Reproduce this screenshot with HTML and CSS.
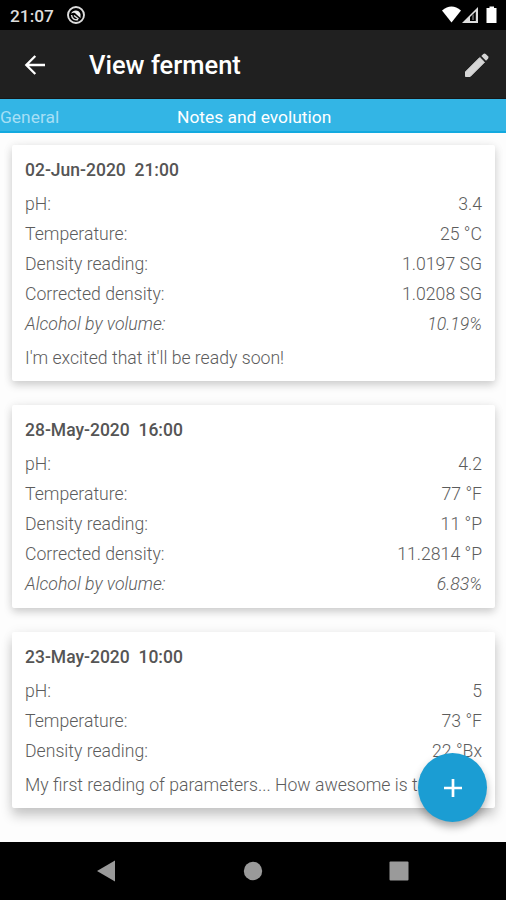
FILE: index.html
```html
<!DOCTYPE html>
<html lang="en">
<head>
    <meta charset="utf-8">
    <title>View ferment</title>
    <link rel="stylesheet" href="styles.css">
</head>
<body>
    <div class="screen">
        <div class="status-bar">
            <span class="clock">21:07</span>
            <svg class="notification" width="20" height="20" viewBox="0 0 20 20">
                <circle cx="10" cy="10" r="8" fill="none" stroke="#ddd" stroke-width="1.9"/>
                <path d="M5 8.5C7 4.500 13 4.500 14.500 9L14.500 13L10.500 9.500C9 7.500 7.500 7.500 5 8.500Z" fill="#eee"/>
                <path d="M5.500 10C6 14 9 15.500 12 14.500M8 10.500L12.500 14" fill="none" stroke="#ddd" stroke-width="1.500"/>
            </svg>
            <svg class="signals" width="56" height="18" viewBox="0 0 56 18">
                <path d="M0 4.500Q9.500-3.500 19 4.500L9.500 16.500Z" fill="#fff"/>
                <path d="M20 17L36 1V17Z" fill="#ddd"/>
                <path d="M28 15V11L33.800 5.500V15Z" fill="#000"/>
                <path d="M30 9.500L32 8V14H30Z" fill="#555"/>
                <path d="M45 2H47.500V0.500H52V2H54.500V17H44.500V2Z" fill="#fff"/>
            </svg>
        </div>

        <div class="app-bar">
            <svg class="back" width="22" height="22" viewBox="0 0 22 22">
                <path d="M21 11H2.500M11.300 2L2.300 11L11.300 20" fill="none" stroke="#fff" stroke-width="2.300"/>
            </svg>
            <h1>View ferment</h1>
            <svg class="edit" width="26" height="26" viewBox="0 0 26 26">
                <path d="M1.500 24.500V19.800L15.800 5.500L20.500 10.200L6.200 24.500Z" fill="#d6d6d6" stroke="#d6d6d6" stroke-linejoin="round"/>
                <path d="M17.300 4L19.300 2Q20.500 1 21.700 2L24 4.300Q25 5.500 24 6.700L22 8.700Z" fill="#d6d6d6"/>
            </svg>
        </div>

        <div class="tabs">
            <span class="tab">General</span>
            <span class="tab active">Notes and evolution</span>
        </div>

        <div class="content">
            <div class="card">
                <h2>02-Jun-2020&nbsp; 21:00</h2>
                <div class="row"><span>pH:</span><span>3.4</span></div>
                <div class="row"><span>Temperature:</span><span>25 °C</span></div>
                <div class="row"><span>Density reading:</span><span>1.0197 SG</span></div>
                <div class="row"><span>Corrected density:</span><span>1.0208 SG</span></div>
                <div class="row alcohol"><span>Alcohol by volume:</span><span>10.19%</span></div>
                <p class="note">I'm excited that it'll be ready soon!</p>
            </div>

            <div class="card no-note">
                <h2>28-May-2020&nbsp; 16:00</h2>
                <div class="row"><span>pH:</span><span>4.2</span></div>
                <div class="row"><span>Temperature:</span><span>77 °F</span></div>
                <div class="row"><span>Density reading:</span><span>11 °P</span></div>
                <div class="row"><span>Corrected density:</span><span>11.2814 °P</span></div>
                <div class="row alcohol"><span>Alcohol by volume:</span><span>6.83%</span></div>
            </div>

            <div class="card last">
                <h2>23-May-2020&nbsp; 10:00</h2>
                <div class="row"><span>pH:</span><span>5</span></div>
                <div class="row"><span>Temperature:</span><span>73 °F</span></div>
                <div class="row"><span>Density reading:</span><span>22 °Bx</span></div>
                <p class="note">My first reading of parameters... How awesome is t</p>
            </div>

            <button class="add" aria-label="Add">
                <svg width="18" height="18" viewBox="0 0 18 18">
                    <path d="M9 0V18M0 9H18" stroke="#fff" stroke-width="2.700"/>
                </svg>
            </button>
        </div>

        <div class="nav-bar">
            <svg width="20" height="22" viewBox="0 0 20 22"><path d="M1 11L19 0.500V21.500Z" fill="#9a9a9a"/></svg>
            <svg width="20" height="20" viewBox="0 0 20 20"><circle cx="10" cy="10" r="9.200" fill="#9a9a9a"/></svg>
            <svg width="20" height="20" viewBox="0 0 20 20"><rect x="0.500" y="0.500" width="19" height="19" rx="1" fill="#9a9a9a"/></svg>
        </div>
    </div>
</body>
</html>
```

FILE: styles.css
```css
* {
    box-sizing: border-box;
}

body {
    margin: 0;
    font-family: Roboto, "Liberation Sans", sans-serif;
    background-color: #fff;
}

.screen {
    width: 506px;
    height: 900px;
    display: flex;
    flex-direction: column;
    overflow: hidden;
}

.status-bar {
    height: 30px;
    display: flex;
    align-items: center;
    padding: 0 8px 0 10px;
    background-color: #000;
}

.clock {
    font-size: 17.3px;
    font-weight: 500;
    line-height: 20px;
    color: #ddd;
    margin-top: 2px;
}

.notification {
    margin-left: 12px;
}

.signals {
    margin-left: auto;
}

.app-bar {
    height: 69px;
    display: flex;
    align-items: center;
    padding: 1px 16px 0 24px;
    background-color: #202020;
    border-bottom: 1px solid #171717;
}

.app-bar h1 {
    margin: 1px 0 0 43px;
    font-size: 25.5px;
    font-weight: 500;
    color: #fff;
}

.edit {
    margin-left: auto;
}

.tabs {
    height: 34px;
    display: flex;
    align-items: center;
    padding-top: 4px;
    background-color: #33b5e5;
    border-bottom: 2px solid #12a9df;
    font-size: 17.4px;
    color: #fff;
}

.tab {
    width: 177px;
    color: #a6dff5;
}

.tab.active {
    width: auto;
    color: #fff;
}

.content {
    position: relative;
    flex: 1;
    display: flex;
    flex-direction: column;
    gap: 24px;
    padding: 12px 11px 0 12px;
    background-color: #fdfdfd;
}

.card {
    padding: 10px 13px 8px;
    background-color: #fff;
    border-radius: 2px;
    box-shadow: 0 4px 8px rgba(0, 0, 0, 0.17), 0 0 12px rgba(0, 0, 0, 0.06);
    font-size: 17.65px;
    font-weight: 300;
    line-height: 30px;
    color: #5c5c5c;
}

.card.no-note {
    padding-bottom: 9px;
}

.card h2 {
    margin: 0 0 4px;
    font-size: 17.5px;
    font-weight: 500;
    color: #555;
}

.row {
    display: flex;
    justify-content: space-between;
}

.alcohol {
    font-style: italic;
}

.note {
    margin: 4px 0 0;
    white-space: nowrap;
}

.card.last {
    box-shadow: 0 8px 12px rgba(0, 0, 0, 0.2), 0 0 12px rgba(0, 0, 0, 0.06);
}

/* floating button over the list */
.add {
    position: absolute;
    right: 19px;
    bottom: 20px;
    width: 69px;
    height: 69px;
    display: flex;
    align-items: center;
    justify-content: center;
    padding: 0;
    border: none;
    border-radius: 50%;
    background-color: #1b9dd3;
    box-shadow: 0 5px 9px rgba(0, 0, 0, 0.3);
}

.nav-bar {
    height: 58px;
    display: flex;
    align-items: center;
    justify-content: space-between;
    padding: 0 97px 0 96px;
    background-color: #000;
}
```
